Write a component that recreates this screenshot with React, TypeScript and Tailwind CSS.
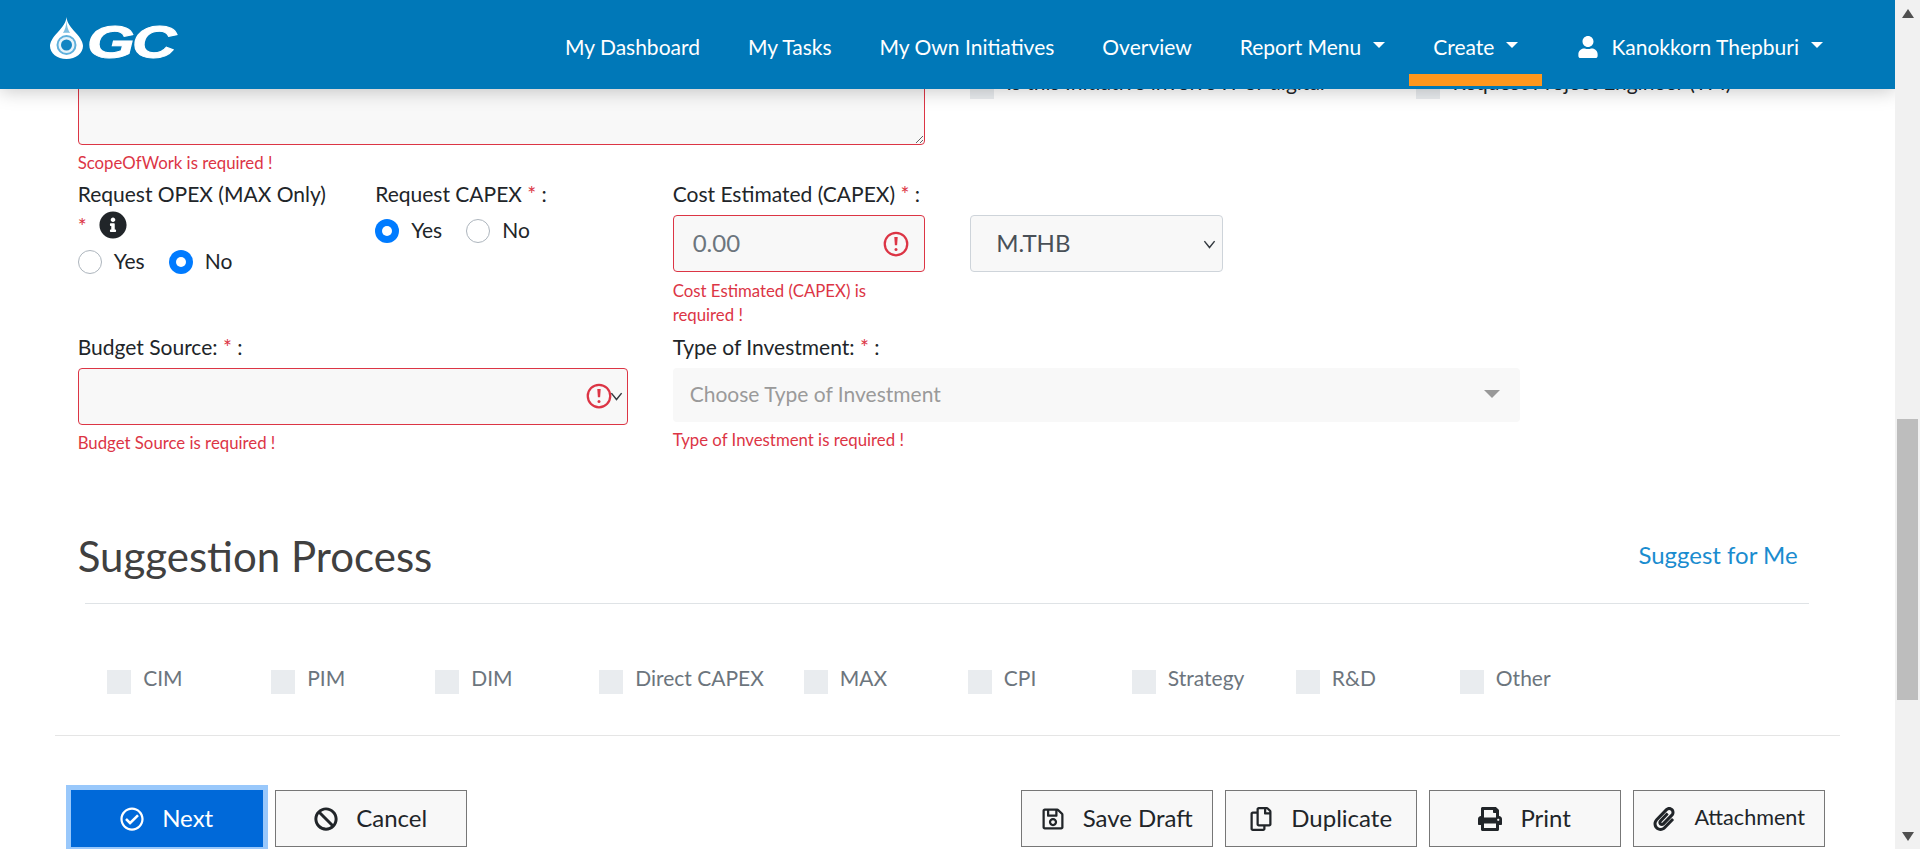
import React from "react";
import { FaInfoCircle, FaPrint, FaPaperclip, FaUser, FaRegCheckCircle, FaRegSave, FaRegCopy, FaBan } from "react-icons/fa";

function Caret() {
  return <span className="ml-[12px] -mt-[4px] inline-block h-0 w-0 border-x-[6px] border-t-[6px] border-x-transparent border-t-white" />;
}

function NavItem({ label, caret, active, icon, className = "" }: { label: string; caret?: boolean; active?: boolean; icon?: React.ReactNode; className?: string }) {
  return (
    <a className={`relative flex h-[89px] items-center whitespace-nowrap px-6 pt-[5px] text-[21px] leading-[28px] text-white ${className}`}>
      {icon}
      <span>{label}</span>
      {caret && <Caret />}
      {active && <span className="absolute bottom-[3px] left-0 right-0 h-[12px] bg-[#ff971d]" />}
    </a>
  );
}

function Logo() {
  return (
    <div className="ml-[50px] flex items-center">
      <svg width="33" height="42" viewBox="0 0 33 42" className="mt-[-14px]">
        <path d="M16.500 0 C17 6 20 9 25 15 C31 21 33 26 33 29 C33 36 26 42 16.500 42 C7 42 0 36 0 29 C0 26 2 21 8 15 C13 9 16 6 16.500 0Z" fill="#fff" />
        <path d="M16.500 4 C16.200 9 15 13 13 16 C15 15.500 18 15.500 20 16 C18 13 16.800 9 16.500 4Z" fill="#7fbfe2" />
        <circle cx="16.500" cy="28" r="10" fill="#5fb0dc" />
        <circle cx="16.500" cy="28" r="8" fill="#e6f3fa" />
        <circle cx="16.500" cy="28" r="5.500" fill="#1284c2" />
      </svg>
      <span className="ml-[4px] mt-[-6px] inline-block w-[90px] origin-left scale-x-[1.33] font-['Liberation_Sans',sans-serif] text-[46px] font-bold italic leading-[44px] tracking-[-2px] text-white [-webkit-text-stroke:1px_white]">GC</span>
    </div>
  );
}

function Header() {
  return (
    <header className="absolute inset-x-0 top-0 z-10 flex h-[89px] items-center justify-between bg-[#0078b8] pr-[48px] shadow-[0_2px_18px_rgba(0,0,0,0.22)]">
      <Logo />
      <nav className="flex items-center">
        <NavItem label="My Dashboard" />
        <NavItem label="My Tasks" />
        <NavItem label="My Own Initiatives" />
        <NavItem label="Overview" />
        <NavItem label="Report Menu" caret />
        <NavItem label="Create" caret active />
        <NavItem label="Kanokkorn Thepburi" caret className="ml-[11px]" icon={<FaUser className="mr-[12px] h-[22px] w-[22px]" />} />
      </nav>
    </header>
  );
}

function Star() {
  return <span className="text-[#dc3545]">*</span>;
}

function Err({ children, className = "" }: { children: React.ReactNode; className?: string }) {
  return <div className={`text-[16.800px] leading-[24.500px] text-[#dc3545] ${className}`}>{children}</div>;
}

function Radio({ label, checked }: { label: string; checked?: boolean }) {
  return (
    <label className="mr-[24px] flex items-center gap-[12px]">
      {checked ? (
        <span className="flex h-[24px] w-[24px] items-center justify-center rounded-full bg-[#007bff]">
          <span className="h-[10px] w-[10px] rounded-full bg-white" />
        </span>
      ) : (
        <span className="h-[24px] w-[24px] rounded-full border border-[#adb5bd] bg-white" />
      )}
      <span className="-mt-[2px] leading-[24px]">{label}</span>
    </label>
  );
}

function ErrorIcon({ className = "" }: { className?: string }) {
  return (
    <svg viewBox="0 0 12 12" width="30" height="30" fill="none" stroke="#dc3545" strokeWidth=".9" className={className}>
      <circle cx="6" cy="6" r="4.500" />
      <path d="M5.800 3.600h.4L6 6.500z" />
      <circle cx="6" cy="8.200" r=".6" fill="#dc3545" stroke="none" />
    </svg>
  );
}

function Chevron({ className = "" }: { className?: string }) {
  return (
    <svg viewBox="0 0 4 5" width="13" height="16" className={className}>
      <path d="M.4 1.600 2 3.600l1.600-2" fill="none" stroke="#343a40" strokeWidth=".45" />
    </svg>
  );
}

function Check({ label, light }: { label: string; light?: boolean }) {
  return (
    <div className={light ? "flex min-w-[164px] pr-[40px] text-[21px] text-[#6c757d]" : "flex items-start"}>
      <span className="h-[24px] w-[24px] shrink-0 bg-[#e9ecef]" />
      <span className={`ml-[12px] whitespace-nowrap leading-[24px] ${light ? "-mt-[4px]" : "-mt-[5px]"}`}>{label}</span>
    </div>
  );
}

function Btn({ icon, label, primary, small }: { icon: React.ReactNode; label: string; primary?: boolean; small?: boolean }) {
  const size = small ? "text-[21.600px]" : "text-[24px]";
  return (
    <button
      className={
        primary
          ? `flex h-[57px] w-[192px] items-center justify-center gap-[18px] bg-[#0069d9] text-white outline-[5px] outline-solid outline-[#99c8fb] ${size}`
          : `flex h-[57px] w-[192px] items-center justify-center gap-[18px] border border-[#777] bg-[#f8f8f8] text-[#212529] ${size}`
      }
    >
      {icon}
      <span className="-mt-[2px]">{label}</span>
    </button>
  );
}

function Scrollbar() {
  return (
    <aside className="flex h-[849px] w-[25px] shrink-0 flex-col bg-[#f1f1f1]">
      <div className="flex h-[26px] items-center justify-center">
        <span className="h-0 w-0 border-x-[6px] border-b-[9px] border-x-transparent border-b-[#505050]" />
      </div>
      <div className="mt-[393px] ml-[2px] h-[281px] w-[21px] bg-[#bdbdbd]" />
      <div className="mt-[123px] flex h-[26px] items-center justify-center">
        <span className="h-0 w-0 border-x-[6px] border-t-[9px] border-x-transparent border-t-[#505050]" />
      </div>
    </aside>
  );
}

export default function App() {
  return (
    <div className="relative flex h-[849px] overflow-hidden bg-white font-['Lato',sans-serif] text-[21px] leading-[29px] text-[#212529]">
      <div className="relative h-[849px] w-[1895px] overflow-hidden">
        <Header />
        <main className="ml-[55.200px] w-[1785px] pt-[45px]">
          <div className="flex">
            <div className="w-[892.500px] px-[22.500px]">
              <textarea readOnly className="block h-[100px] w-full resize-y rounded-[4px] border border-[#dc3545] bg-[#f8f8f8]" />
              <Err className="mt-[6px]">ScopeOfWork is required !</Err>
            </div>
            <div className="w-[446.250px] px-[22.500px] pt-[30px]">
              <Check label="Is this Initiative involve IT or digital" />
            </div>
            <div className="w-[446.250px] px-[22.500px] pt-[30px]">
              <Check label="Request Project Engineer (TPI)" />
            </div>
          </div>

          <div className="mt-[3px] flex">
            <div className="w-[297.500px] px-[22.500px]">
              <div className="whitespace-nowrap">Request OPEX (MAX Only)</div>
              <div className="mt-[3px] flex h-[29px] items-center gap-[12px]">
                <Star />
                <FaInfoCircle className="h-[28px] w-[28px] text-[#212529]" />
              </div>
              <div className="mt-[10px] flex">
                <Radio label="Yes" />
                <Radio label="No" checked />
              </div>
            </div>
            <div className="w-[297.500px] px-[22.500px]">
              <div>Request CAPEX <Star /> :</div>
              <div className="mt-[11px] flex">
                <Radio label="Yes" checked />
                <Radio label="No" />
              </div>
            </div>
            <div className="w-[297.500px] px-[22.500px]">
              <div className="whitespace-nowrap">Cost Estimated (CAPEX) <Star /> :</div>
              <div className="mt-[7px] flex h-[57px] items-center justify-between rounded-[4px] border border-[#dc3545] bg-[#f8f8f8] pl-[19px] pr-[13px] text-[24px] text-[#6c757d]">
                <span className="-mt-[2px]">0.00</span>
                <ErrorIcon className="mt-[2px]" />
              </div>
              <Err className="mt-[7px]">Cost Estimated (CAPEX) is required !</Err>
            </div>
            <div className="w-[297.500px] px-[22.500px] pt-[36px]">
              <div className="flex h-[57px] items-center justify-between rounded-[4px] border border-[#ced4da] bg-[#f8f8f8] pl-[25px] pr-[5px] text-[24px] text-[#495057]">
                <span className="-mt-[2px]">M.THB</span>
                <Chevron className="mr-[1px] mt-[2px]" />
              </div>
            </div>
          </div>

          <div className="mt-[4px] flex">
            <div className="w-[595px] px-[22.500px]">
              <div>Budget Source: <Star /> :</div>
              <div className="mt-[7px] flex h-[57px] items-center justify-end rounded-[4px] border border-[#dc3545] bg-[#f8f8f8] pr-[4px]">
                <ErrorIcon className="mt-[-1px]" />
                <Chevron className="-ml-[4px]" />
              </div>
              <Err className="mt-[6px]">Budget Source is required !</Err>
            </div>
            <div className="w-[892.500px] px-[22.500px]">
              <div>Type of Investment: <Star /> :</div>
              <div className="mt-[7px] flex h-[54px] items-center justify-between rounded-[4px] bg-[#f8f8f8] pb-[2px] pl-[17px] pr-[20px] text-[21px] text-[#9a9a9a]">
                <span>Choose Type of Investment</span>
                <span className="h-0 w-0 border-x-[8px] border-t-[8px] border-x-transparent border-t-[#999]" />
              </div>
              <Err className="mt-[6px]">Type of Investment is required !</Err>
            </div>
          </div>

          <div className="mt-[77px] flex items-center justify-between px-[22.500px]">
            <h2 className="text-[42px] leading-[48px] text-[#404040]">Suggestion Process</h2>
            <a className="mr-[20px] -mt-[2px] text-[24px] leading-[32px] text-[#1a8ccf]">Suggest for Me</a>
          </div>
          <div className="ml-[30px] mt-[23px] h-px w-[1724px] bg-[#dfe3e6]" />
          <div className="ml-[52px] mt-[66px] flex">
            {["CIM", "PIM", "DIM", "Direct CAPEX", "MAX", "CPI", "Strategy", "R&D", "Other"].map((c) => (
              <Check key={c} label={c} light />
            ))}
          </div>
          <div className="mt-[41px] h-px w-full bg-[#e5e5e5]" />
          <div className="mt-[54px] flex justify-between px-[15.500px]">
            <div className="flex gap-[12px]">
              <Btn primary label="Next" icon={<FaRegCheckCircle className="h-[24px] w-[24px]" />} />
              <Btn label="Cancel" icon={<FaBan className="h-[24px] w-[24px]" />} />
            </div>
            <div className="flex gap-[12px]">
              <Btn label="Save Draft" icon={<FaRegSave className="h-[24px] w-[24px]" />} />
              <Btn label="Duplicate" icon={<FaRegCopy className="h-[24px] w-[24px]" />} />
              <Btn label="Print" icon={<FaPrint className="h-[24px] w-[24px]" />} />
              <Btn small label="Attachment" icon={<FaPaperclip className="h-[24px] w-[24px]" />} />
            </div>
          </div>
        </main>
      </div>
      <Scrollbar />
    </div>
  );
}
